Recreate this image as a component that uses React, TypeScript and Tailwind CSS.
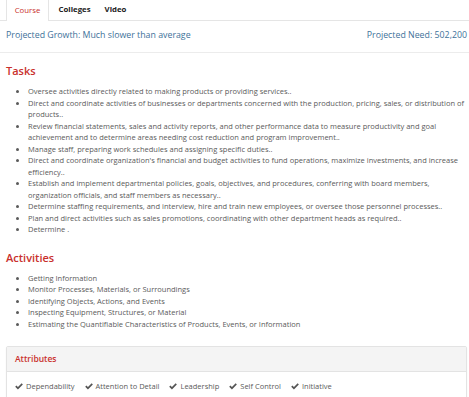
import React from 'react';

const tasks = [
  'Oversee activities directly related to making products or providing services..',
  'Direct and coordinate activities of businesses or departments concerned with the production, pricing, sales, or distribution of products..',
  'Review financial statements, sales and activity reports, and other performance data to measure productivity and goal achievement and to determine areas needing cost reduction and program improvement..',
  'Manage staff, preparing work schedules and assigning specific duties..',
  "Direct and coordinate organization's financial and budget activities to fund operations, maximize investments, and increase efficiency..",
  'Establish and implement departmental policies, goals, objectives, and procedures, conferring with board members, organization officials, and staff members as necessary..',
  'Determine staffing requirements, and interview, hire and train new employees, or oversee those personnel processes..',
  'Plan and direct activities such as sales promotions, coordinating with other department heads as required..',
  'Determine .',
];

const activities = [
  'Getting Information',
  'Monitor Processes, Materials, or Surroundings',
  'Identifying Objects, Actions, and Events',
  'Inspecting Equipment, Structures, or Material',
  'Estimating the Quantifiable Characteristics of Products, Events, or Information',
];

const attributes = ['Dependability', 'Attention to Detail', 'Leadership', 'Self Control', 'Initiative'];

const Check: React.FC = () => (
  <svg viewBox="0 0 12 10" className="w-[8px] h-[7px] mr-[3px] fill-[#555]">
    <path d="M0.3 5.4 L2.1 3.6 L4.4 5.8 L10 0.2 L11.8 2 L4.4 9.4 Z" />
  </svg>
);

const App: React.FC = () => {
  return (
    <div
      className="w-[469px] h-[397px] overflow-hidden bg-white text-[#5a5a5a]"
      style={{ fontFamily: '"Open Sans", sans-serif' }}
    >
      {/* Tabs */}
      <div className="flex px-[6px] border-b border-[#e5e5e5] h-[21px] text-[7.8px] font-bold">
        <div className="w-[43px] flex items-center justify-center border-x border-[#e5e5e5] bg-white -mb-px text-[#c9302c] font-normal">
          Course
        </div>
        <div className="w-[51px] flex items-center justify-center text-[#222]">Colleges</div>
        <div className="w-[31px] flex items-center justify-center text-[#222]">Video</div>
      </div>

      {/* Projections */}
      <div className="flex justify-between pl-[6px] pr-[2px] pt-[8px] pb-[10px] text-[8.8px] text-[#41729a] border-b border-[#ececec]">
        <span>Projected Growth: Much slower than average</span>
        <span>Projected Need: 502,200</span>
      </div>

      {/* Tasks */}
      <div className="pl-[6px] pr-[2px] pt-[11px]">
        <h2 className="text-[11px] font-semibold text-[#c9302c] leading-[14px]">Tasks</h2>
        <ul className="list-disc pl-[22px] pt-[8px] text-[7.5px] leading-[11.5px]">
          {tasks.map((t) => (
            <li key={t}>{t}</li>
          ))}
        </ul>

        <h2 className="text-[11px] font-semibold text-[#c9302c] leading-[14px] mt-[15px]">Activities</h2>
        <ul className="list-disc pl-[22px] pt-[8px] text-[7.5px] leading-[11.5px]">
          {activities.map((a) => (
            <li key={a}>{a}</li>
          ))}
        </ul>

        {/* Attributes */}
        <div className="mt-[16px] border border-[#e3e3e3] rounded-[2px] shadow-[0_1px_2px_rgba(0,0,0,0.05)]">
          <div className="bg-[#f4f4f4] border-b border-[#e3e3e3] h-[25px] flex items-center px-[8px] text-[8.5px] text-[#c9302c] font-semibold">
            Attributes
          </div>
          <div className="flex items-center gap-[10px] px-[8px] h-[28px] text-[7.5px]">
            {attributes.map((a) => (
              <span key={a} className="flex items-center">
                <Check />
                {a}
              </span>
            ))}
          </div>
        </div>
      </div>
    </div>
  );
};

export default App;
